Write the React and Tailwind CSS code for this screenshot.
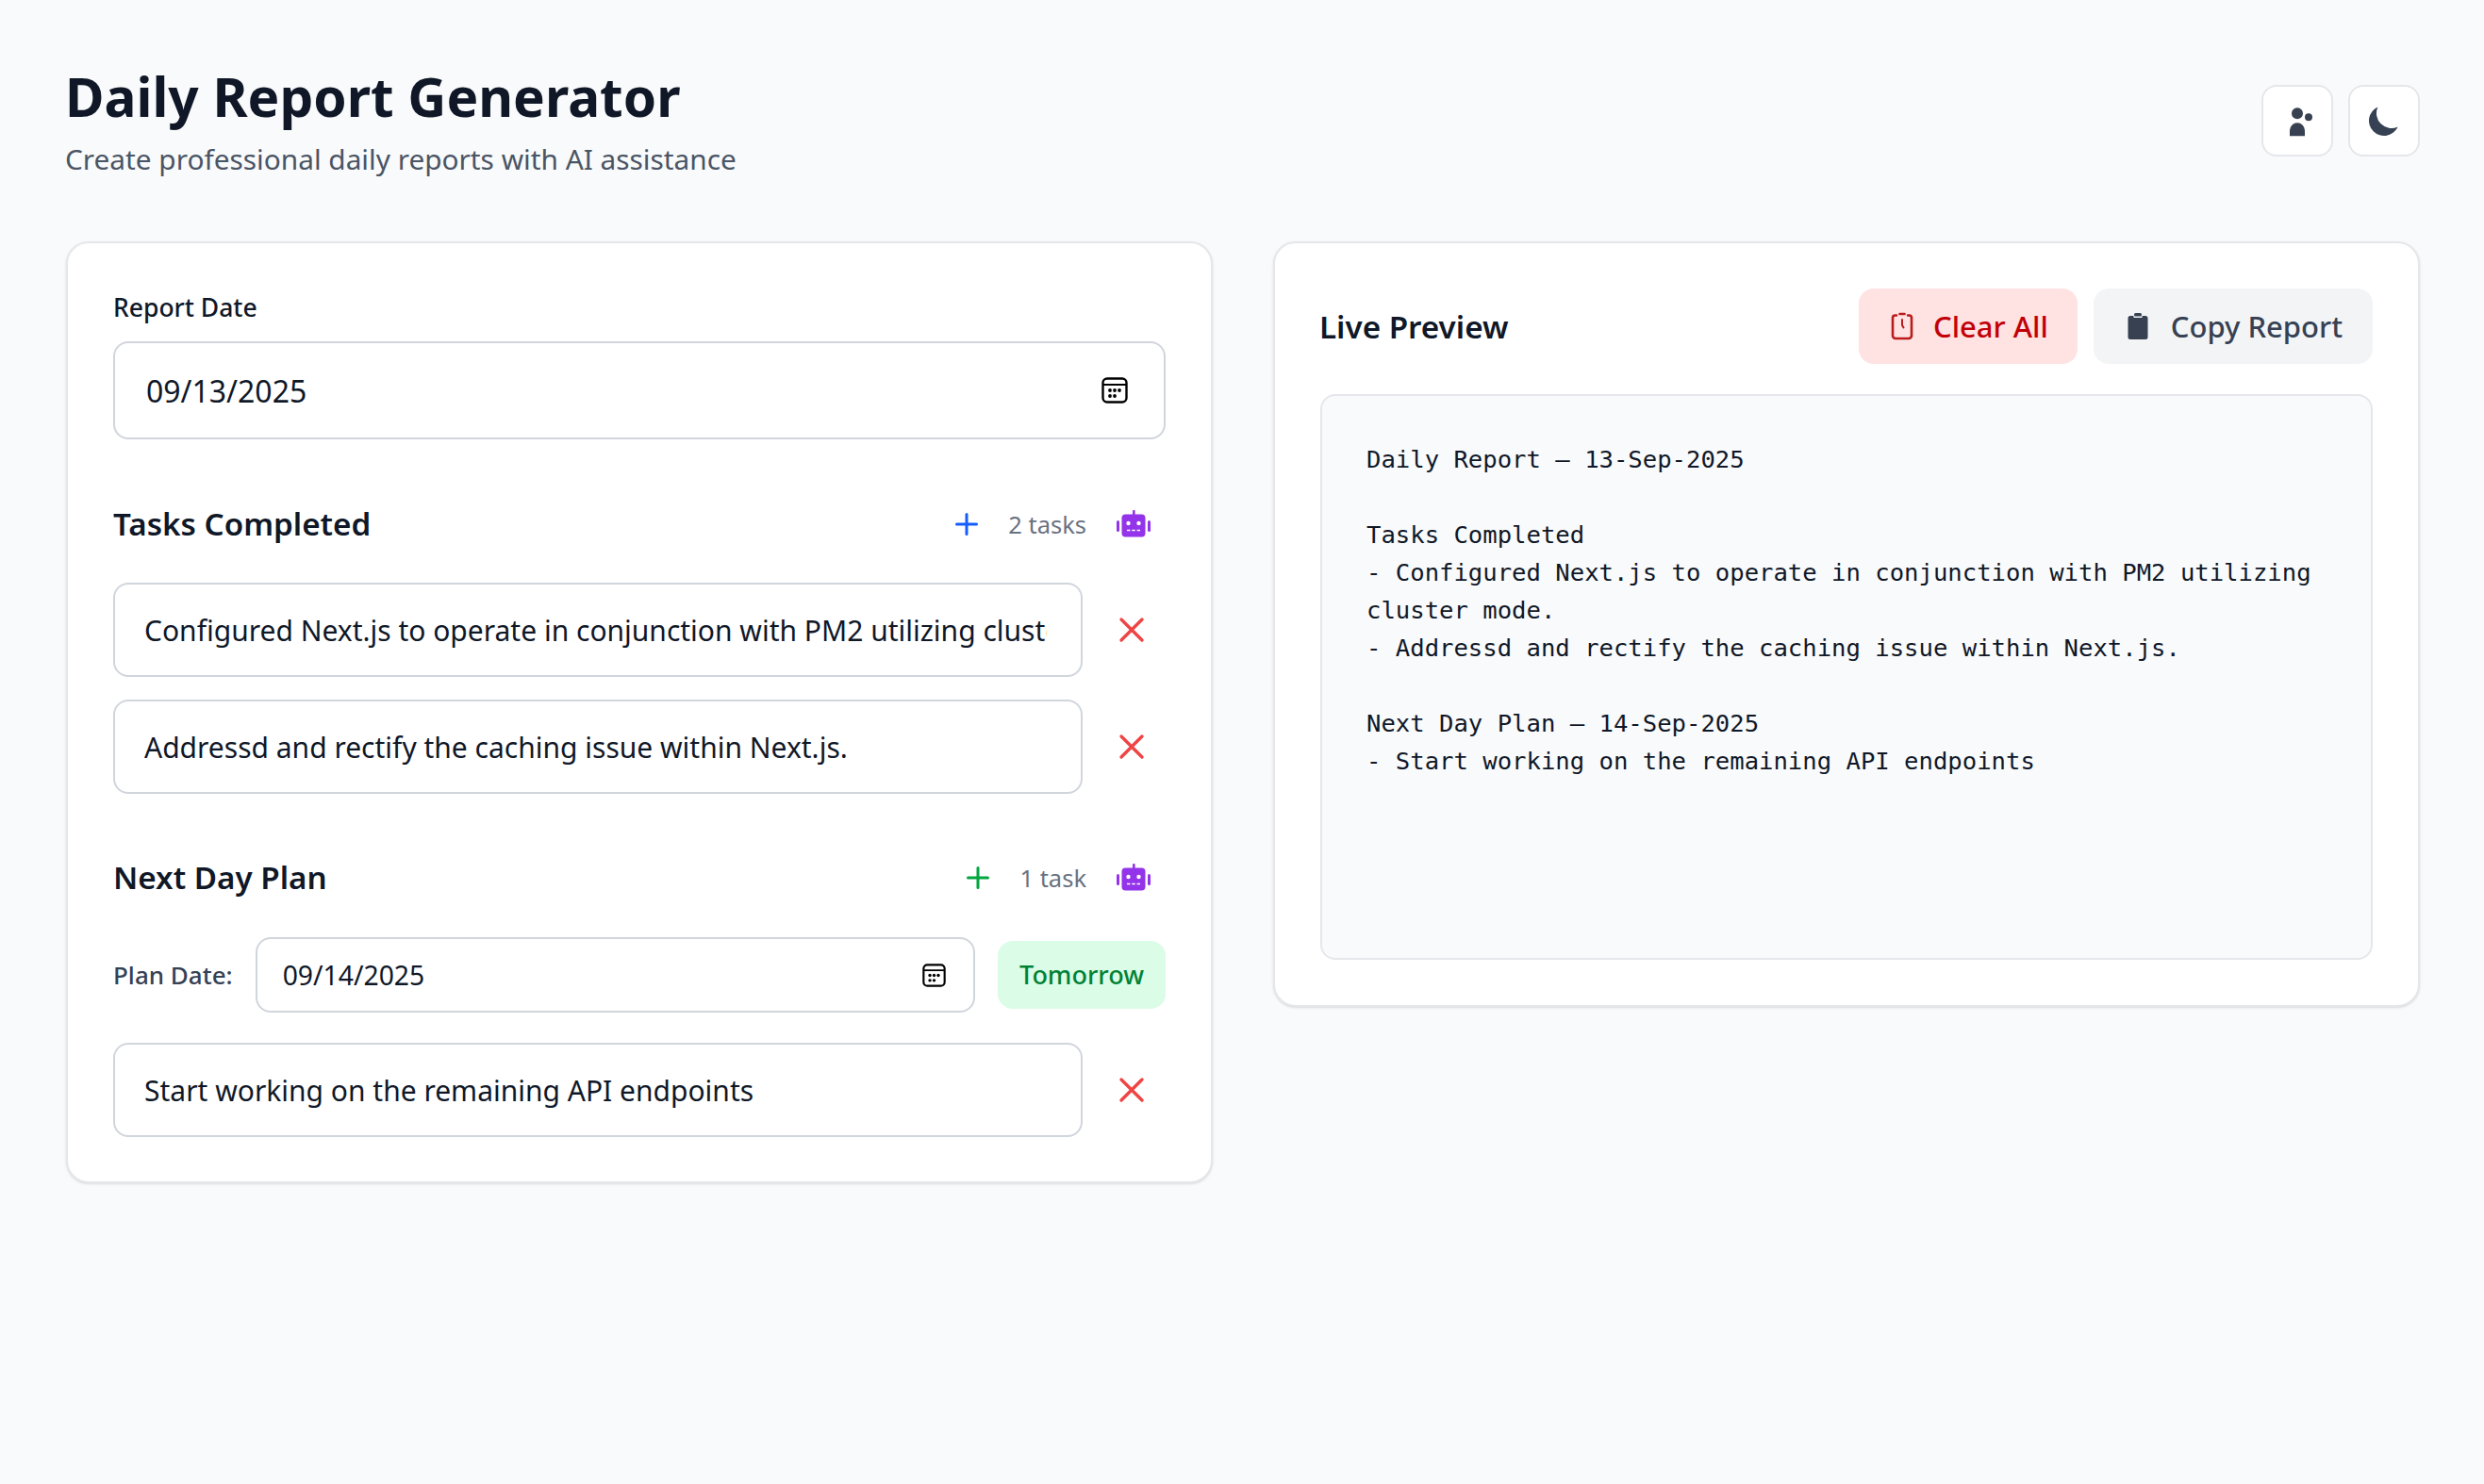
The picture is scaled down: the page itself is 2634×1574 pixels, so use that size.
import React from 'react';
import { HiMoon } from 'react-icons/hi';

const sans = { fontFamily: '"Noto Sans", sans-serif' };

const CalendarIcon = ({ size }) => (
  <svg width={size} height={size} viewBox="0 0 28 28" fill="none" className="shrink-0 text-black">
    <rect x="1.5" y="1.5" width="25" height="25" rx="4.5" stroke="currentColor" strokeWidth="2.4" />
    <path d="M2 8h24" stroke="currentColor" strokeWidth="2" />
    <g fill="currentColor">
      <circle cx="9" cy="14" r="1.9" /><circle cx="14" cy="14" r="1.9" /><circle cx="19" cy="14" r="1.9" />
      <circle cx="9" cy="20" r="1.9" /><circle cx="14" cy="20" r="1.9" />
    </g>
  </svg>
);

const PersonIcon = () => (
  <svg width="40" height="40" viewBox="0 0 40 40" fill="#374151">
    <circle cx="20" cy="12.3" r="6" />
    <circle cx="32" cy="16.3" r="4" />
    <path d="M12 36.3v-6a8 8 0 0 1 16 0v6z" />
  </svg>
);

const RobotIcon = () => (
  <svg width="36" height="30" viewBox="0 0 36 30" fill="#9333ea" className="shrink-0">
    <rect x="17" y="0" width="2.6" height="6" rx="1" />
    <rect x="5.5" y="4.5" width="25" height="24" rx="4" />
    <rect x="0" y="11" width="3" height="12" rx="1.5" />
    <rect x="33" y="11" width="3" height="12" rx="1.5" />
    <circle cx="12.5" cy="14" r="2.2" fill="#fff" />
    <circle cx="23.5" cy="14" r="2.2" fill="#fff" />
    <path d="M11 21.5h3.4M16.3 21.5h3.4M21.6 21.5h3.4" stroke="#fff" strokeWidth="1.6" />
  </svg>
);

const PlusIcon = ({ className }) => (
  <svg width="24" height="24" viewBox="0 0 24 24" fill="none" stroke="currentColor" strokeWidth="3" strokeLinecap="round" className={className}>
    <path d="M12 1.5v21M1.5 12h21" />
  </svg>
);

const RemoveIcon = () => (
  <svg width="28" height="28" viewBox="0 0 28 28" fill="none" stroke="#ef4444" strokeWidth="3.4" strokeLinecap="round">
    <path d="M3 3l22 22M25 3L3 25" />
  </svg>
);

const TimerIcon = () => (
  <svg width="24" height="30" viewBox="0 0 24 30" fill="none" stroke="#b91c1c" strokeWidth="2.6" strokeLinecap="round" strokeLinejoin="round" className="shrink-0">
    <path d="M6 3.500H4.500A2.500 2.500 0 0 0 2 6v19a3 3 0 0 0 3 3h14a3 3 0 0 0 3-3V6a2.500 2.500 0 0 0-2.500-2.500H18" />
    <path d="M9.500 2h5" />
    <path d="M12 8v6l1.500 2.500" strokeWidth="2" />
  </svg>
);

const ClipboardIcon = () => (
  <svg width="22" height="28" viewBox="0 0 22 28" fill="#374151" className="shrink-0">
    <path d="M3 3h3.500V5h9V3H19a2.500 2.500 0 0 1 2.500 2.500v20A2.500 2.500 0 0 1 19 28H3a2.500 2.500 0 0 1-2.500-2.500v-20A2.500 2.500 0 0 1 3 3z" />
    <rect x="7" y="0" width="8" height="3.500" rx="1.500" />
  </svg>
);

const TaskRow = ({ value }) => (
  <div className="flex items-center gap-4">
    <input
      readOnly
      value={value}
      className="flex-1 min-w-0 h-[100px] pl-[31px] pr-[36px] border-2 border-gray-300 rounded-2xl bg-white text-[30px] text-gray-900 outline-none"
    />
    <button className="w-[72px] h-[74px] flex items-center justify-center">
      <RemoveIcon />
    </button>
  </div>
);

const SectionHeader = ({ title, count, plus }) => (
  <div className="flex items-center justify-between h-[56px]">
    <h2 className="text-[33.200px] font-semibold text-gray-900">{title}</h2>
    <div className="flex items-center pr-4">
      {plus}
      <span className="ml-[32px] mr-[32px] text-[25.500px] text-gray-500">{count}</span>
      <RobotIcon />
    </div>
  </div>
);

const preview = `Daily Report – 13-Sep-2025

Tasks Completed
- Configured Next.js to operate in conjunction with PM2 utilizing cluster mode.
- Addressd and rectify the caching issue within Next.js.

Next Day Plan – 14-Sep-2025
- Start working on the remaining API endpoints`;

export default function App() {
  return (
    <div className="min-h-screen bg-gray-50 pt-[64px] pl-[70px] pr-[68px]" style={sans}>
      {/* Header */}
      <div className="flex justify-between items-start h-[192px]">
        <div>
          <h1 className="text-[56.700px] leading-[76px] font-bold text-gray-900 -ml-px">Daily Report Generator</h1>
          <p className="mt-[7px] text-[29.800px] leading-[44px] text-gray-600 -ml-px">Create professional daily reports with AI assistance</p>
        </div>
        <div className="flex gap-4 mt-[26px]">
          <button className="w-[76px] h-[76px] flex items-center justify-center bg-white border-2 border-gray-200 rounded-2xl">
            <PersonIcon />
          </button>
          <button className="w-[76px] h-[76px] flex items-center justify-center bg-white border-2 border-gray-200 rounded-2xl">
            <HiMoon size={40} className="text-gray-700" />
          </button>
        </div>
      </div>

      <div className="grid grid-cols-2 gap-16 items-start">
        {/* Form */}
        <div className="bg-white border-2 border-gray-200 rounded-3xl shadow-sm p-[48px] pb-[47px]">
          <label className="block text-[26.500px] leading-[40px] font-medium text-gray-900 mb-[16px]">Report Date</label>
          <div className="flex items-center h-[104px] pl-[33px] pr-[38px] border-2 border-gray-300 rounded-2xl">
            <input readOnly value="09/13/2025" className="flex-1 min-w-0 pt-[2px] text-[32px] text-gray-900 outline-none" />
            <CalendarIcon size={28} />
          </div>

          <div className="mt-[62px] mb-[34px]">
            <SectionHeader title="Tasks Completed" count="2 tasks" plus={<PlusIcon className="text-blue-600" />} />
          </div>
          <div className="flex flex-col gap-[24px]">
            <TaskRow value="Configured Next.js to operate in conjunction with PM2 utilizing cluster mode." />
            <TaskRow value="Addressd and rectify the caching issue within Next.js." />
          </div>

          <div className="mt-[61px] mb-[35px]">
            <SectionHeader title="Next Day Plan" count="1 task" plus={<PlusIcon className="text-green-600" />} />
          </div>
          <div className="flex items-center gap-[24px] mb-[32px]">
            <span className="text-[26px] font-medium text-gray-700">Plan Date:</span>
            <div className="flex flex-1 items-center h-[80px] pl-[27px] pr-[29px] border-2 border-gray-300 rounded-2xl">
              <input readOnly value="09/14/2025" className="flex-1 min-w-0 text-[28.300px] text-gray-900 outline-none" />
              <CalendarIcon size={25} />
            </div>
            <span className="h-[72px] px-[23px] flex items-center bg-green-100 text-green-700 text-[27px] font-medium rounded-2xl">Tomorrow</span>
          </div>
          <TaskRow value="Start working on the remaining API endpoints" />
        </div>

        {/* Preview */}
        <div className="bg-white border-2 border-gray-200 rounded-3xl shadow-sm p-[48px]">
          <div className="flex items-center justify-between mb-[32px]">
            <h2 className="pt-[2px] text-[33.200px] font-semibold text-gray-900 -ml-px">Live Preview</h2>
            <div className="flex gap-[17px]">
              <button className="h-[80px] pl-[34px] pr-[31px] flex items-center gap-[21px] bg-red-100 text-red-700 text-[31px] font-medium rounded-2xl">
                <TimerIcon />
                Clear All
              </button>
              <button className="h-[80px] pl-[36px] pr-[32px] flex items-center gap-[24px] bg-gray-100 text-gray-700 text-[31px] font-medium rounded-2xl">
                <ClipboardIcon />
                Copy Report
              </button>
            </div>
          </div>
          <pre className="min-h-[600px] pl-[47px] pr-[48px] pt-[47px] pb-[48px] bg-gray-50 border-2 border-gray-200 rounded-2xl font-['DejaVu_Sans_Mono',monospace] text-[25.600px] leading-[40px] text-gray-900 whitespace-pre-wrap">{preview}</pre>
        </div>
      </div>
    </div>
  );
}
